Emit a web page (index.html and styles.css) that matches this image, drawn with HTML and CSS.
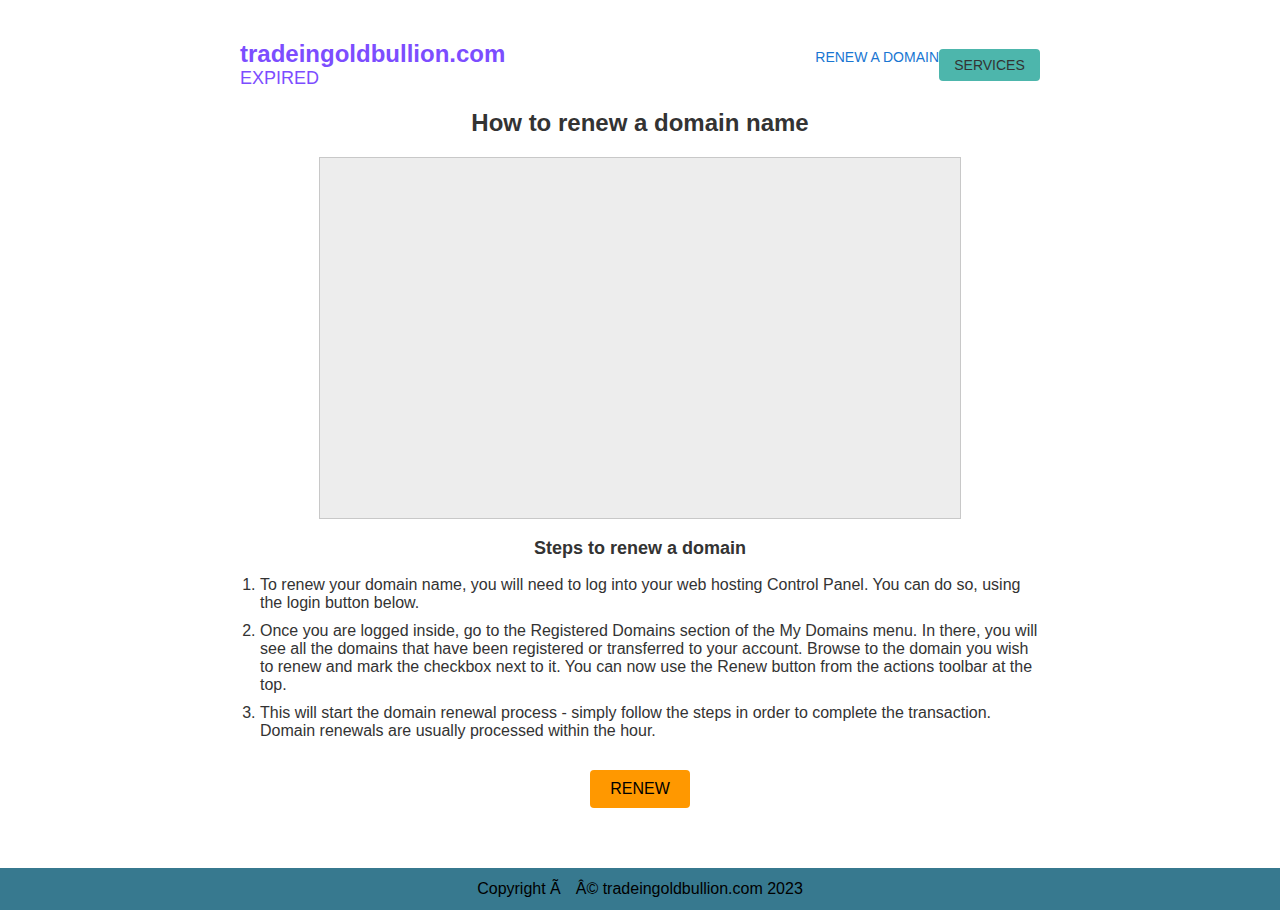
FILE: index.html
```html
<!DOCTYPE html>
<html lang="en">
<head>
<meta charset="utf-8">
<title>tradeingoldbullion.com</title>
<link rel="stylesheet" href="styles.css">
</head>
<body>
<div class="page">
  <header class="header">
    <div class="brand">
      <div class="domain">tradeingoldbullion.com</div>
      <div class="status">EXPIRED</div>
    </div>
    <nav class="nav">
      <a class="nav-link" href="#">RENEW A DOMAIN</a>
      <a class="nav-btn" href="#">SERVICES</a>
    </nav>
  </header>
  <main class="main">
    <h1 class="title">How to renew a domain name</h1>
    <div class="picture"></div>
    <h2 class="subtitle">Steps to renew a domain</h2>
    <ol class="steps">
      <li>To renew your domain name, you will need to log into your web hosting Control Panel. You can do so, using the login button below.</li>
      <li>Once you are logged inside, go to the Registered Domains section of the My Domains menu. In there, you will see all the domains that have been registered or transferred to your account. Browse to the domain you wish to renew and mark the checkbox next to it. You can now use the Renew button from the actions toolbar at the top.</li>
      <li>This will start the domain renewal process - simply follow the steps in order to complete the transaction. Domain renewals are usually processed within the hour.</li>
    </ol>
    <div class="actions"><a class="renew-btn" href="#">RENEW</a></div>
  </main>
</div>
<footer class="footer">Copyright Ã<span class="gap"></span>Â© tradeingoldbullion.com 2023</footer>
</body>
</html>
```
FILE: styles.css
```css
html, body {
  margin: 0;
  padding: 0;
  background: #fff;
  font-family: "Liberation Sans", Arial, sans-serif;
  color: #333;
}
.page {
  width: 800px;
  margin: 0 auto;
  min-height: 868px;
  box-sizing: border-box;
  padding-top: 39px;
}
.header {
  display: flex;
  justify-content: space-between;
  align-items: flex-start;
}
.domain {
  font-size: 24px;
  font-weight: bold;
  color: #7c4dff;
  line-height: 29px;
}
.status {
  font-size: 18px;
  color: #7c4dff;
  line-height: 21px;
}
.nav {
  display: flex;
  align-items: flex-start;
  padding-top: 10px;
}
.nav-link {
  font-size: 14px;
  color: #1976d2;
  text-decoration: none;
  line-height: 16px;
}
.nav-btn {
  display: block;
  width: 101px;
  height: 32px;
  box-sizing: border-box;
  line-height: 32px;
  text-align: center;
  font-size: 14px;
  color: #333;
  background: #4db6ac;
  border-radius: 4px;
  text-decoration: none;
}
.main {
  display: flex;
  flex-direction: column;
  align-items: center;
}
.title {
  margin: 20px 0 0;
  font-size: 24px;
  line-height: 28px;
  font-weight: bold;
  color: #333;
}
.picture {
  margin-top: 20px;
  width: 640px;
  height: 360px;
  background: #ededed;
  border: 1px solid #c8c8c8;
}
.subtitle {
  margin: 19px 0 0;
  font-size: 18px;
  line-height: 21px;
  font-weight: bold;
  color: #333;
}
.steps {
  align-self: stretch;
  margin: 17px 0 0;
  padding-left: 20px;
  font-size: 16px;
  line-height: 18px;
  color: #333;
}
.steps li {
  margin-bottom: 10px;
}
.steps li:last-child {
  margin-bottom: 0;
}
.actions {
  margin-top: 30px;
}
.renew-btn {
  display: block;
  width: 100px;
  height: 38px;
  line-height: 38px;
  text-align: center;
  background: #ff9800;
  color: #000;
  font-size: 16px;
  border-radius: 4px;
  text-decoration: none;
}
.footer {
  height: 42px;
  line-height: 42px;
  text-align: center;
  background: #37798f;
  color: #000;
  font-size: 16px;
}
.gap {
  display: inline-block;
  width: 15px;
}
```
